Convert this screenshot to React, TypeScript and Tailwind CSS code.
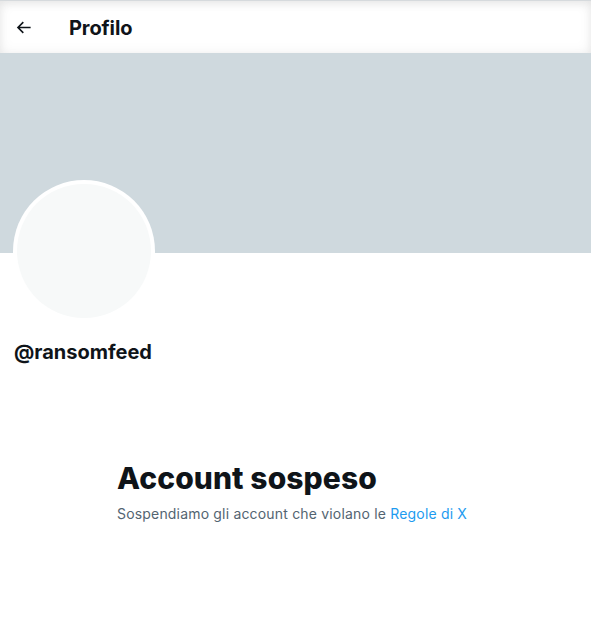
import React from "react";

export default function App() {
  return (
    <div className="w-[591px] h-[623px] bg-white overflow-hidden" style={{ fontFamily: "Inter, 'Noto Sans', sans-serif" }}>
      <div className="h-[53px] flex items-center bg-white border-t border-[#d6dadd] shadow-[inset_0_3px_8px_rgba(0,0,0,0.07),inset_0_0_14px_rgba(0,0,0,0.05)]">
        <div className="w-[69px] pl-[14px] flex items-center pt-[1px]">
          <svg viewBox="0 0 24 24" width="19" height="19" fill="#0f1419">
            <path d="M7.414 13l5.043 5.04-1.414 1.42L3.586 12l7.457-7.46 1.414 1.42L7.414 11H21v2H7.414z" />
          </svg>
        </div>
        <div className="text-[20px] font-bold text-[#0f1419] tracking-[-0.1px] pt-[1px]">Profilo</div>
      </div>
      <div className="h-[200px] bg-[#cfd9de]" />
      <div className="px-[13px]">
        <div className="-mt-[73px] w-[142px] h-[142px] rounded-full bg-white p-[4px]">
          <div className="w-full h-full rounded-full bg-[#f7f9f9]" />
        </div>
        <div className="mt-[18px] pl-[1px] text-[20px] font-bold text-[#0f1419] leading-[24px]">@ransomfeed</div>
      </div>
      <div className="pl-[117px] mt-[96px]">
        <div className="text-[30px] font-extrabold text-[#0f1419] leading-[36px] tracking-[0.1px]">Account sospeso</div>
        <div className="mt-[8px] text-[14px] tracking-[0.18px] text-[#536471] leading-[20px]">
          Sospendiamo gli account che violano le <span className="text-[#1d9bf0]">Regole di X</span>
        </div>
      </div>
    </div>
  );
}
